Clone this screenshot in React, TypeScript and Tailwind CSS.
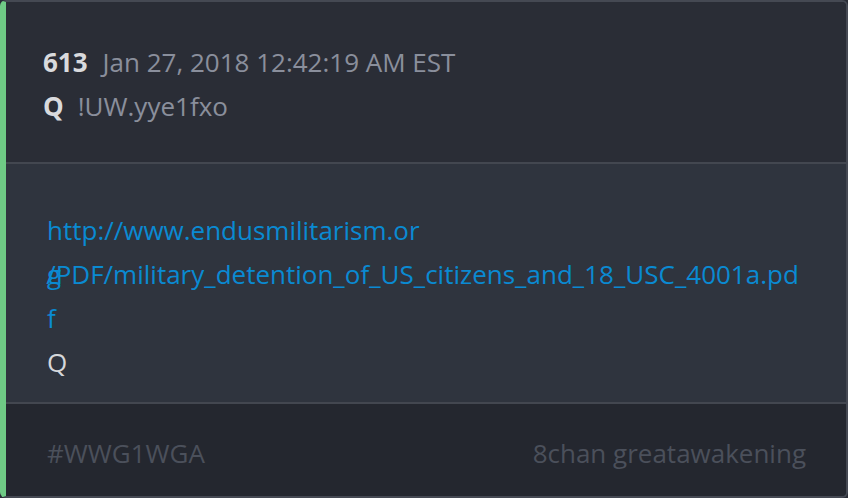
import React from 'react';

const font = { fontFamily: '"Open Sans", "Noto Sans", sans-serif' };

const App: React.FC = () => {
  return (
    <div className="w-[848px] h-[498px] bg-[#2a2d36]" style={font}>
      <div className="h-full flex flex-col rounded-md overflow-hidden border-2 border-[#454953] border-l-[6px] border-l-[#6fca85]">
        <div className="bg-[#2a2d36] pl-[37px] pt-[38px] pb-[33px] text-[26px] leading-[44px] h-[160px]">
          <div className="flex gap-[15px]">
            <span className="font-bold text-[#d9dadd]">613</span>
            <span className="text-[#8a8f9c]">Jan 27, 2018 12:42:19 AM EST</span>
          </div>
          <div className="flex gap-[14px]">
            <span className="font-bold text-[#d9dadd]">Q</span>
            <span className="text-[#8a8f9c]">!UW.yye1fxo</span>
          </div>
        </div>
        <div className="h-[2px] bg-[#434750]" />
        <div className="bg-[#2f343e] pl-[41px] pt-[44px] pb-[18px] text-[26px] leading-[44px] h-[238px]">
          <a className="block text-[#0a8ad2]">
            <span className="block">http://www.endusmilitarism.or</span>
            <span className="block whitespace-nowrap">
              g<span className="ml-[-15px]">/PDF/military_detention_of_US_citizens_and_18_USC_4001a.pd</span>
            </span>
            <span className="block">f</span>
          </a>
          <div className="text-[#d6d7da]">Q</div>
        </div>
        <div className="h-[2px] bg-[#434750]" />
        <div className="flex-1 bg-[#24272f] pl-[41px] pr-[40px] pt-[27px] flex justify-between text-[26px] leading-[44px] text-[#4b505b]">
          <span>#WWG1WGA</span>
          <span>8chan greatawakening</span>
        </div>
      </div>
    </div>
  );
};

export default App;
